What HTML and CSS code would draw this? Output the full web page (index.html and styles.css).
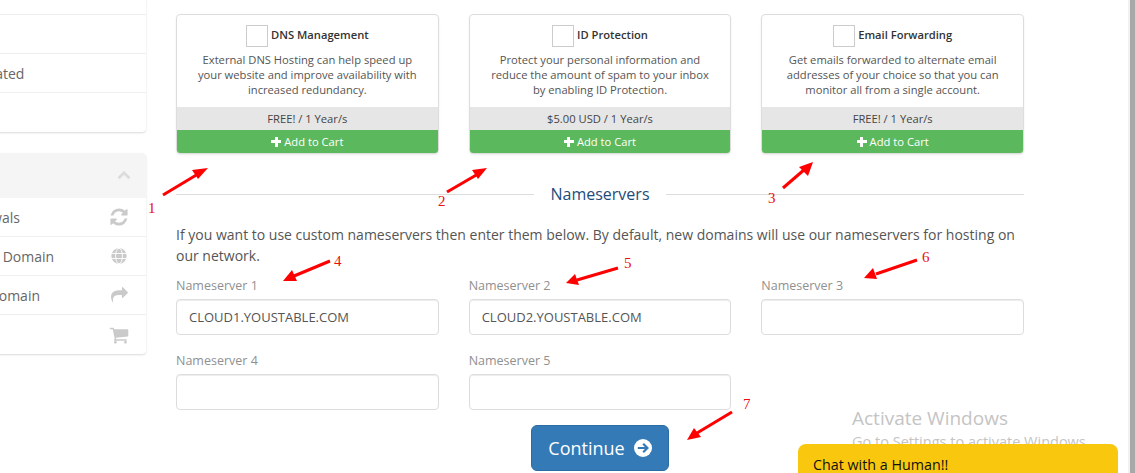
FILE: index.html
```html
<!DOCTYPE html>
<html lang="en">
<head>
    <meta charset="UTF-8">
    <meta name="viewport" content="width=device-width, initial-scale=1.0">
    <title>Domain configuration</title>
    <link rel="stylesheet" href="styles.css">
</head>
<body>
    <div class="page">
        <aside class="sidebar">
            <div class="panel">
                <div class="side-row"></div>
                <div class="side-row"></div>
                <div class="side-row indent-sm">Domain Activated</div>
                <div class="side-row"></div>
            </div>
            <div class="panel">
                <div class="panel-head">
                    <svg class="chevron" viewBox="0 0 18 11"><polyline points="2,9 9,2 16,9"/></svg>
                </div>
                <div class="side-row">
                    Domain Renewals
                    <svg class="side-icon" viewBox="0 0 1792 1792"><path d="M1639 1056q0 5-1 7-64 268-268 434.5t-478 166.5q-146 0-282.5-55t-243.5-157l-129 129q-19 19-45 19t-45-19-19-45v-448q0-26 19-45t45-19h448q26 0 45 19t19 45-19 45l-137 137q71 66 161 102t187 36q134 0 250-65t186-179q11-17 53-117 8-23 30-23h192q13 0 22.5 9.5t9.5 22.5zm25-800v448q0 26-19 45t-45 19h-448q-26 0-45-19t-19-45 19-45l138-138q-148-137-349-137-134 0-250 65t-186 179q-11 17-53 117-8 23-30 23h-199q-13 0-22.5-9.5t-9.5-22.5v-7q65-268 270-434.5t480-166.5q146 0 284 55.5t245 156.5l130-129q19-19 45-19t45 19 19 45z"/></svg>
                </div>
                <div class="side-row indent">
                    Register Your Domain
                    <svg class="side-icon globe" viewBox="0 0 20 20">
                        <circle class="globe-disc" cx="10" cy="10" r="8.5"/>
                        <ellipse cx="10" cy="10" rx="3.8" ry="8.5"/>
                        <path d="M1.5 7.2h17M1.5 12.8h17"/>
                    </svg>
                </div>
                <div class="side-row">
                    Transfer in a Domain
                    <svg class="side-icon share" viewBox="0 0 1792 1792"><path d="M1792 640q0 26-19 45l-512 512q-19 19-45 19t-45-19-19-45v-256h-224q-98 0-175.5 6t-154 21.5-133 42.5-105.5 69.5-80 101-48.5 138.5-17.5 181q0 55 5 123 0 6 2.5 23.5t2.5 26.5q0 15-8.5 25t-23.5 10q-16 0-28-17-7-9-13-22t-13.5-30-10.5-24q-127-285-127-451 0-199 53-333 162-403 875-403h224v-256q0-26 19-45t45-19 45 19l512 512q19 19 19 45z"/></svg>
                </div>
                <div class="side-row">
                    View Cart
                    <svg class="side-icon" viewBox="0 0 1792 1792"><path d="M704 1536q0 52-38 90t-90 38-90-38-38-90 38-90 90-38 90 38 38 90zm896 0q0 52-38 90t-90 38-90-38-38-90 38-90 90-38 90 38 38 90zm128-1088v512q0 24-16.5 42.5t-40.5 21.5l-1044 122q13 60 13 70 0 16-24 64h920q26 0 45 19t19 45-19 45-45 19h-1024q-26 0-45-19t-19-45q0-11 8-31.5t16-36 21.5-40 15.5-29.5l-177-823h-204q-26 0-45-19t-19-45 19-45 45-19h256q16 0 28.5 6.5t19.5 15.5 13 24.5 8 26 5.5 29.5 4.5 26h1201q26 0 45 19t19 45z"/></svg>
                </div>
            </div>
        </aside>

        <main class="main">
            <div class="addons">
                <div class="addon">
                    <div class="addon-body">
                        <div class="addon-title"><span class="check"></span><span class="addon-name">DNS Management</span></div>
                        <p>External DNS Hosting can help speed up your website and improve availability with increased redundancy.</p>
                    </div>
                    <div class="addon-price">FREE! / 1 Year/s</div>
                    <div class="addon-add"><span class="plus"></span>Add to Cart</div>
                </div>
                <div class="addon">
                    <div class="addon-body">
                        <div class="addon-title"><span class="check"></span><span class="addon-name">ID Protection</span></div>
                        <p>Protect your personal information and reduce the amount of spam to your inbox by enabling ID Protection.</p>
                    </div>
                    <div class="addon-price">$5.00 USD / 1 Year/s</div>
                    <div class="addon-add"><span class="plus"></span>Add to Cart</div>
                </div>
                <div class="addon">
                    <div class="addon-body">
                        <div class="addon-title"><span class="check"></span><span class="addon-name">Email Forwarding</span></div>
                        <p>Get emails forwarded to alternate email addresses of your choice so that you can monitor all from a single account.</p>
                    </div>
                    <div class="addon-price">FREE! / 1 Year/s</div>
                    <div class="addon-add"><span class="plus"></span>Add to Cart</div>
                </div>
            </div>

            <h2 class="divider"><span>Nameservers</span></h2>

            <p class="intro">If you want to use custom nameservers then enter them below. By default, new domains will use our nameservers for hosting on our network.</p>

            <div class="ns-grid">
                <div class="field">
                    <label for="ns1">Nameserver 1</label>
                    <input type="text" id="ns1" value="CLOUD1.YOUSTABLE.COM">
                </div>
                <div class="field">
                    <label for="ns2">Nameserver 2</label>
                    <input type="text" id="ns2" value="CLOUD2.YOUSTABLE.COM">
                </div>
                <div class="field">
                    <label for="ns3">Nameserver 3</label>
                    <input type="text" id="ns3">
                </div>
                <div class="field">
                    <label for="ns4">Nameserver 4</label>
                    <input type="text" id="ns4">
                </div>
                <div class="field">
                    <label for="ns5">Nameserver 5</label>
                    <input type="text" id="ns5">
                </div>
            </div>

            <div class="actions">
                <button class="continue">
                    Continue
                    <svg viewBox="0 0 18 18">
                        <circle cx="9" cy="9" r="9"/>
                        <path class="continue-arrow" d="M3.8 9h9.4M9.2 4.8 13.4 9l-4.2 4.2"/>
                    </svg>
                </button>
            </div>
        </main>
    </div>

    <!-- red notes drawn on top of the screenshot -->
    <svg class="notes" viewBox="0 0 1135 473">
        <g class="arrow">
            <line x1="163" y1="195" x2="198" y2="174"/>
            <polygon points="208,168 198,179 192,170"/>
            <line x1="447" y1="192" x2="478" y2="174"/>
            <polygon points="487,168 478,179 472,170"/>
            <line x1="783" y1="188" x2="805" y2="169"/>
            <polygon points="813,162 808,176 799,167"/>
            <line x1="330" y1="261" x2="294" y2="276"/>
            <polygon points="283,281 292,270 297,281"/>
            <line x1="618" y1="268" x2="577" y2="280"/>
            <polygon points="566,283 575,274 579,285"/>
            <line x1="917" y1="260" x2="876" y2="274"/>
            <polygon points="864,278 873,268 877,279"/>
            <line x1="732" y1="412" x2="697" y2="433"/>
            <polygon points="687,440 694,428 701,437"/>
        </g>
        <text x="148" y="213">1</text>
        <text x="438" y="206">2</text>
        <text x="768" y="203">3</text>
        <text x="334" y="266">4</text>
        <text x="624" y="268">5</text>
        <text x="922" y="262">6</text>
        <text x="743" y="409">7</text>
    </svg>

    <div class="watermark">
        <div class="watermark-title">Activate Windows</div>
        <div>Go to Settings to activate Windows.</div>
    </div>

    <div class="chat">Chat with a Human!!</div>
    <div class="scrollbar"></div>
</body>
</html>
```

FILE: styles.css
```css
html, body {
    margin: 0;
    height: 100%;
    overflow: hidden;
}

body {
    background: #fff;
    color: #58595b;
    font-family: "Open Sans", sans-serif;
    font-size: 14px;
}

.page {
    display: flex;
    align-items: flex-start;
}

/* sidebar runs off the left edge, page is scrolled sideways */
.sidebar {
    flex: none;
    width: 243px;
    margin: -24px 0 0 -97px;
}

.panel {
    background: #fff;
    border-radius: 4px;
    box-shadow: 0 1px 2px rgba(0, 0, 0, 0.15);
    margin-bottom: 21px;
    overflow: hidden;
}

.panel-head {
    display: flex;
    align-items: center;
    justify-content: flex-end;
    height: 45px;
    padding-right: 15px;
    background: #f5f5f5;
}

.chevron {
    width: 14px;
    height: 9px;
    fill: none;
    stroke: #dcdcdc;
    stroke-width: 3.5;
}

.side-row {
    display: flex;
    align-items: center;
    justify-content: space-between;
    box-sizing: border-box;
    height: 39px;
    padding-right: 17px;
    border-bottom: 1px solid #eee;
    color: #666;
    white-space: nowrap;
}

.side-row:last-child {
    border-bottom: none;
}

.indent-sm {
    padding-left: 6px;
}

.indent {
    padding-left: 9px;
}

.side-icon {
    width: 20px;
    height: 20px;
    fill: #cacaca;
}

.share {
    width: 17px;
    margin-right: 1px;
}

.globe {
    width: 18px;
    height: 18px;
    margin-right: 1px;
    fill: none;
    stroke: #fff;
    stroke-width: 1;
}

.globe-disc {
    fill: #cacaca;
    stroke: none;
}

.main {
    flex: none;
    width: 848px;
    margin-left: 30px;
    padding-top: 14px;
}

.addons, .ns-grid {
    display: grid;
    grid-template-columns: repeat(3, 1fr);
    column-gap: 30px;
}

.addon {
    display: flex;
    flex-direction: column;
    height: 140px;
    box-sizing: border-box;
    border: 1px solid #ddd;
    border-radius: 4px;
    box-shadow: 0 1px 2px rgba(0, 0, 0, 0.08);
    overflow: hidden;
    font-size: 11.2px;
    text-align: center;
}

.addon-body {
    flex: 1;
    padding: 10px 18px 0;
}

.addon-title {
    display: flex;
    align-items: center;
    justify-content: center;
    color: #333;
    font-weight: 600;
}

.addon-name {
    margin-bottom: 3px;
}

.check {
    width: 20px;
    height: 20px;
    margin-right: 3px;
    border: 1px solid #ccc;
}

.addon-body p {
    margin: 5px 0 0;
    line-height: 15px;
    color: #555;
}

.addon-price {
    height: 23px;
    line-height: 23px;
    background: #e6e6e6;
    color: #444;
}

.addon-add {
    display: flex;
    align-items: center;
    justify-content: center;
    height: 23px;
    background: #5cb85c;
    color: #fff;
}

.plus {
    width: 10px;
    height: 10px;
    margin-right: 3px;
    background:
        linear-gradient(#fff, #fff) center / 100% 3px no-repeat,
        linear-gradient(#fff, #fff) center / 3px 100% no-repeat;
}

.divider {
    display: flex;
    align-items: center;
    gap: 16px;
    height: 26px;
    margin: 27px 0 0;
    color: #1e4c7a;
    font-size: 16px;
    font-weight: 400;
}

.divider:before, .divider:after {
    content: "";
    flex: 1;
    height: 1px;
    background: #ddd;
}

.intro {
    margin: 17px 0 0;
    line-height: 21px;
    color: #555;
}

.ns-grid {
    margin-top: 8px;
    row-gap: 14px;
}

.field label {
    display: block;
    height: 22px;
    line-height: 23px;
    margin-bottom: 3px;
    color: #909090;
    font-size: 12.5px;
}

.field input {
    display: block;
    box-sizing: border-box;
    width: 100%;
    height: 36px;
    padding: 0 12px;
    border: 1px solid #ddd;
    border-radius: 4px;
    box-shadow: inset 0 1px 1px rgba(0, 0, 0, 0.075);
    color: #555;
    font-family: "Open Sans", sans-serif;
    font-size: 13px;
}

.actions {
    display: flex;
    justify-content: center;
    margin-top: 15px;
}

.continue {
    display: flex;
    align-items: center;
    gap: 9px;
    height: 46px;
    padding: 0 16px;
    border: 1px solid #2e6da4;
    border-radius: 6px;
    background: #337ab7;
    color: #fff;
    font-family: "Open Sans", sans-serif;
    font-size: 18px;
}

.continue svg {
    width: 18px;
    height: 18px;
    fill: #fff;
}

.continue-arrow {
    fill: none;
    stroke: #337ab7;
    stroke-width: 2.2;
}

.notes {
    position: absolute;
    top: 0;
    left: 0;
    width: 1135px;
    height: 473px;
    pointer-events: none;
}

.notes text {
    fill: #e81010;
    font-family: "Liberation Serif", serif;
    font-size: 15px;
}

.arrow line {
    stroke: #f00;
    stroke-width: 3;
}

.arrow polygon {
    fill: #f00;
}

.watermark {
    position: absolute;
    top: 405px;
    left: 852px;
    color: #c4c4c4;
    font-family: "Open Sans", sans-serif;
    font-size: 14.5px;
    white-space: nowrap;
}

.watermark-title {
    font-size: 19px;
    margin-bottom: 1px;
}

.chat {
    position: absolute;
    top: 444px;
    left: 798px;
    box-sizing: border-box;
    width: 320px;
    height: 40px;
    padding: 11px 15px;
    border-radius: 8px 8px 0 0;
    background: #f9c80e;
    color: #111;
    font-size: 14.3px;
}

.scrollbar {
    position: absolute;
    top: 0;
    right: 0;
    bottom: 0;
    width: 5px;
    border-left: 2px solid #f1f1f1;
    background: #a8a8a8;
}
```
